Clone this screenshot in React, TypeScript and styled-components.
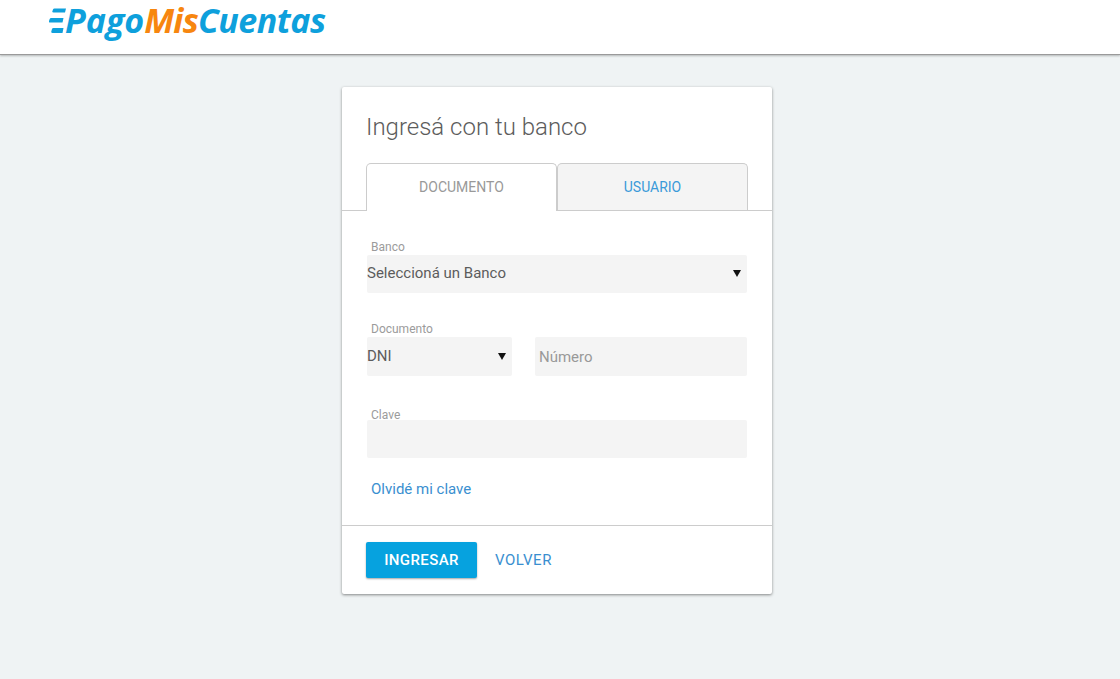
import React, { FC } from 'react'
import styled, { createGlobalStyle } from 'styled-components'

const GlobalStyle = createGlobalStyle`
	html, body {
		margin: 0;
		height: 100%;
		background: #eff3f4;
		font-family: Roboto, "Liberation Sans", sans-serif;
	}
	* {
		box-sizing: border-box;
	}
`

const Header = styled.header`
	height: 55px;
	background: #fff;
	border-bottom: 1px solid #9a9a9a;
	box-shadow: 0 1px 2px rgba(0, 0, 0, 0.25);
	padding: 0 0 0 49px;
	display: flex;
	align-items: flex-start;
`

const Logo = styled.div`
	display: flex;
	align-items: flex-start;
`

const LogoMark = styled.svg`
	flex: none;
	margin: 8px -1px 0 0;
`

const LogoText = styled.span<{ $orange?: boolean }>`
	font-family: 'Open Sans', sans-serif;
	font-style: italic;
	font-weight: 700;
	font-size: 34px;
	letter-spacing: ${(p) => (p.$orange ? '-0.8px' : '-0.5px')};
	line-height: 40px;
	color: ${(p) => (p.$orange ? '#f7860f' : '#0ea0dc')};
`

const LogoLead = styled(LogoText)`
	letter-spacing: 0;
`

const Main = styled.main`
	display: flex;
	justify-content: center;
	padding: 32px 6px 0 0;
`

const Card = styled.section`
	width: 430px;
	height: 507px;
	background: #fff;
	border-radius: 2px;
	box-shadow: 0 1px 3px rgba(0, 0, 0, 0.45);
	display: flex;
	flex-direction: column;
`

const Title = styled.h1`
	margin: 0;
	padding: 24px 24px 0;
	height: 76px;
	font-size: 24px;
	line-height: 32px;
	font-weight: 300;
	color: #5c5c5c;
`

const Tabs = styled.div`
	display: flex;
	height: 48px;
	padding: 0 24px;
	border-bottom: 1px solid #ccc;
`

const Tab = styled.div<{ $active?: boolean }>`
	width: 191px;
	height: ${(p) => (p.$active ? '48px' : '47px')};
	display: flex;
	align-items: center;
	justify-content: center;
	padding-bottom: ${(p) => (p.$active ? '1px' : '0')};
	font-size: 14px;
	border: 1px solid #ccc;
	border-bottom: none;
	border-radius: 5px 5px 0 0;
	background: ${(p) => (p.$active ? '#fff' : '#f4f4f4')};
	color: ${(p) => (p.$active ? '#999' : '#3a9ad9')};
`

const Body = styled.div`
	flex: 1;
	display: flex;
	flex-direction: column;
	padding: 29px 25px 0;
`

const Field = styled.div<{ $gap: number }>`
	margin-bottom: ${(p) => p.$gap}px;
`

const Label = styled.div<{ $top?: number }>`
	font-size: 12px;
	line-height: 14px;
	height: 15px;
	padding: ${(p) => p.$top ?? 0}px 0 0 4px;
	color: #9b9b9b;
`

const Control = styled.div<{ $height: number; $width?: number }>`
	display: flex;
	align-items: center;
	justify-content: space-between;
	height: ${(p) => p.$height}px;
	width: ${(p) => (p.$width ? `${p.$width}px` : '100%')};
	padding-bottom: 2px;
	background: #f4f4f4;
	border-radius: 2px;
	font-size: 15px;
	color: #5c5c5c;
`

const Placeholder = styled.span`
	padding: 2px 0 0 4px;
	color: #999;
`

const Caret = styled.svg`
	width: 8px;
	height: 8px;
	margin-right: 6px;
	flex: none;
`

const Row = styled.div`
	display: flex;
	justify-content: space-between;
`

const ForgotLink = styled.a`
	padding-left: 4px;
	font-size: 15px;
	line-height: 18px;
	color: #3a8fd0;
`

const Footer = styled.footer`
	height: 69px;
	border-top: 1px solid #ccc;
	padding: 16px 24px 0;
	display: flex;
	align-items: flex-start;
	gap: 18px;
`

const PrimaryButton = styled.button`
	width: 111px;
	height: 36px;
	padding: 0;
	border: 0;
	border-radius: 2px;
	background: #06a2df;
	color: #fff;
	font-family: inherit;
	font-size: 15px;
	font-weight: 500;
	letter-spacing: 0.4px;
	box-shadow: 0 1px 2px rgba(0, 0, 0, 0.35);
`

const TextButton = styled.a`
	line-height: 36px;
	font-size: 15px;
	letter-spacing: 0.5px;
	color: #3a8fd0;
`

const SelectCaret: FC = () => (
	<Caret viewBox="0 0 8 8">
		<path d="M0 1h8L4 8z" fill="#111" />
	</Caret>
)

const App: FC = () => (
	<>
		<GlobalStyle />
		<Header>
			<Logo>
				<LogoMark width="17" height="25" viewBox="0 0 17 25">
					<path d="M4 1.500Q4.300 .5 5.500 .5H17L16 4.500H4.500Q3 4.500 3.300 3.500zM.7 11Q1 10 2.200 10H14.500L13.500 14.500H1Q-.3 14.500 0 13zM3 21Q3.300 20 4.500 20H14.500L13.500 25H3.500Q2 25 2.300 23.500z" fill="#0ea0dc" />
				</LogoMark>
				<LogoLead>Pago</LogoLead>
				<LogoText $orange>Mis</LogoText>
				<LogoText>Cuentas</LogoText>
			</Logo>
		</Header>
		<Main>
			<Card>
				<Title>Ingresá con tu banco</Title>
				<Tabs>
					<Tab $active>DOCUMENTO</Tab>
					<Tab>USUARIO</Tab>
				</Tabs>
				<Body>
					<Field $gap={29}>
						<Label>Banco</Label>
						<Control $height={38}>
							Seleccioná un Banco
							<SelectCaret />
						</Control>
					</Field>
					<Field $gap={29}>
						<Label>Documento</Label>
						<Row>
							<Control $height={39} $width={145}>
								DNI
								<SelectCaret />
							</Control>
							<Control $height={39} $width={212}>
								<Placeholder>Número</Placeholder>
							</Control>
						</Row>
					</Field>
					<Field $gap={22}>
						<Label $top={3}>Clave</Label>
						<Control $height={38} />
					</Field>
					<ForgotLink>Olvidé mi clave</ForgotLink>
				</Body>
				<Footer>
					<PrimaryButton>INGRESAR</PrimaryButton>
					<TextButton>VOLVER</TextButton>
				</Footer>
			</Card>
		</Main>
	</>
)

export default App
